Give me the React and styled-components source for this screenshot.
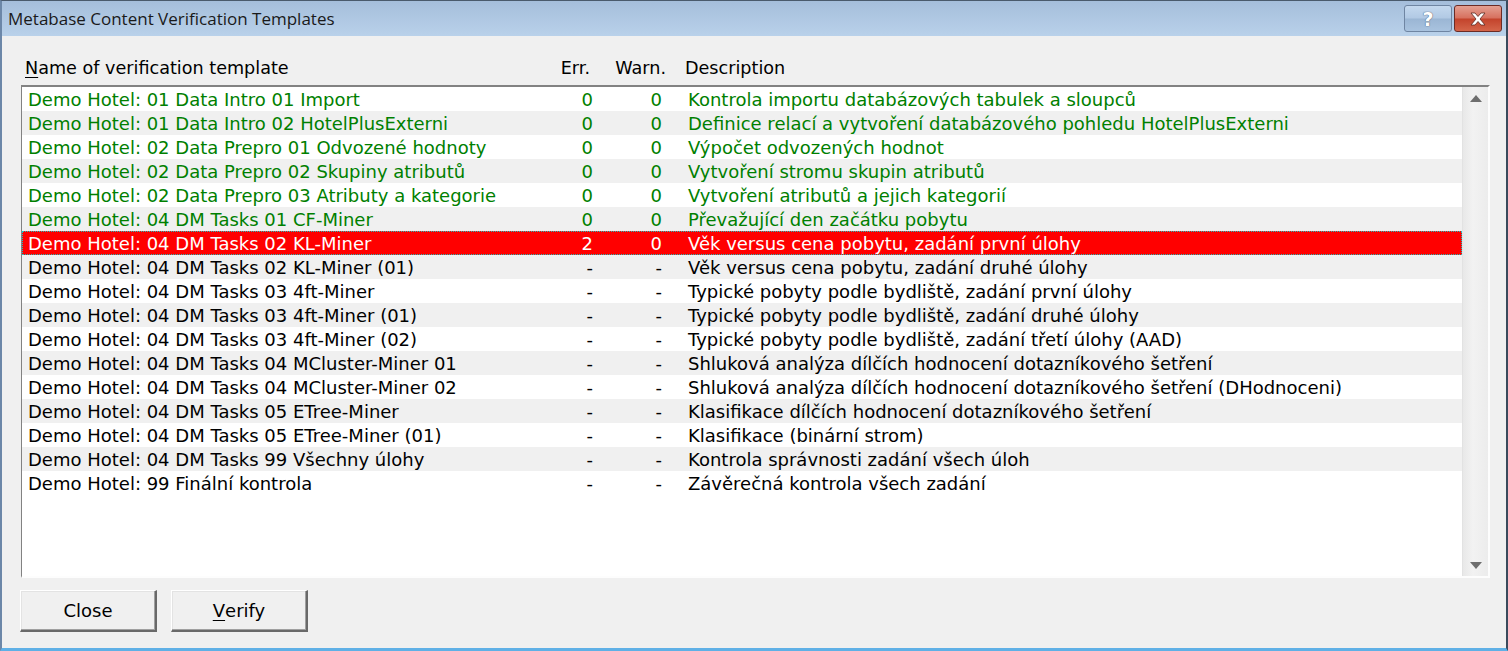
import React from 'react';
import styled, { createGlobalStyle } from 'styled-components';

const Global = createGlobalStyle`
  html, body { margin: 0; padding: 0; background: #f0f0f0; }
  body { font-family: "DejaVu Sans", Tahoma, sans-serif; }
`;

const rows = [
  ['Demo Hotel: 01 Data Intro 01 Import', '0', '0', 'Kontrola importu databázových tabulek a sloupců', 'ok'],
  ['Demo Hotel: 01 Data Intro 02 HotelPlusExterni', '0', '0', 'Definice relací a vytvoření databázového pohledu HotelPlusExterni', 'ok'],
  ['Demo Hotel: 02 Data Prepro 01 Odvozené hodnoty', '0', '0', 'Výpočet odvozených hodnot', 'ok'],
  ['Demo Hotel: 02 Data Prepro 02 Skupiny atributů', '0', '0', 'Vytvoření stromu skupin atributů', 'ok'],
  ['Demo Hotel: 02 Data Prepro 03 Atributy a kategorie', '0', '0', 'Vytvoření atributů a jejich kategorií', 'ok'],
  ['Demo Hotel: 04 DM Tasks 01 CF-Miner', '0', '0', 'Převažující den začátku pobytu', 'ok'],
  ['Demo Hotel: 04 DM Tasks 02 KL-Miner', '2', '0', 'Věk versus cena pobytu, zadání první úlohy', 'err'],
  ['Demo Hotel: 04 DM Tasks 02 KL-Miner (01)', '-', '-', 'Věk versus cena pobytu, zadání druhé úlohy', ''],
  ['Demo Hotel: 04 DM Tasks 03 4ft-Miner', '-', '-', 'Typické pobyty podle bydliště, zadání první úlohy', ''],
  ['Demo Hotel: 04 DM Tasks 03 4ft-Miner (01)', '-', '-', 'Typické pobyty podle bydliště, zadání druhé úlohy', ''],
  ['Demo Hotel: 04 DM Tasks 03 4ft-Miner (02)', '-', '-', 'Typické pobyty podle bydliště, zadání třetí úlohy (AAD)', ''],
  ['Demo Hotel: 04 DM Tasks 04 MCluster-Miner 01', '-', '-', 'Shluková analýza dílčích hodnocení dotazníkového šetření', ''],
  ['Demo Hotel: 04 DM Tasks 04 MCluster-Miner 02', '-', '-', 'Shluková analýza dílčích hodnocení dotazníkového šetření (DHodnoceni)', ''],
  ['Demo Hotel: 04 DM Tasks 05 ETree-Miner', '-', '-', 'Klasifikace dílčích hodnocení dotazníkového šetření', ''],
  ['Demo Hotel: 04 DM Tasks 05 ETree-Miner (01)', '-', '-', 'Klasifikace (binární strom)', ''],
  ['Demo Hotel: 04 DM Tasks 99 Všechny úlohy', '-', '-', 'Kontrola správnosti zadání všech úloh', ''],
  ['Demo Hotel: 99 Finální kontrola', '-', '-', 'Závěrečná kontrola všech zadání', ''],
];

const App = () => {
  return (
    <>
      <Global />
      <Window>
        <TitleBar>
          <Title>Metabase Content Verification Templates</Title>
          <Caption>
            <HelpBtn>?</HelpBtn>
            <CloseBtn>
              <svg width="20" height="16" viewBox="0 0 20 16">
                <path d="M3 2 L7 2 L10 5.5 L13 2 L17 2 L12 8 L17 14 L13 14 L10 10.5 L7 14 L3 14 L8 8 Z"
                  fill="#fff" stroke="#5a2a22" strokeWidth="0.8" strokeLinejoin="round" />
              </svg>
            </CloseBtn>
          </Caption>
        </TitleBar>
        <Body>
          <Header>
            <NameHead><u>N</u>ame of verification template</NameHead>
            <NumHead $w={69}>Err.</NumHead>
            <NumHead $w={76}>Warn.</NumHead>
            <DescHead>Description</DescHead>
          </Header>
          <ListBox>
            <Rows>
              {rows.map((r, i) => (
                <Row key={i} $alt={i % 2 === 1} $state={r[4]}>
                  <NameCell>{r[0]}</NameCell>
                  <NumCell>{r[1]}</NumCell>
                  <NumCell>{r[2]}</NumCell>
                  <DescCell>{r[3]}</DescCell>
                </Row>
              ))}
            </Rows>
            <ScrollBar>
              <Arrow>
                <svg width="12" height="7" viewBox="0 0 12 7"><path d="M0 7 L6 0 L12 7 Z" fill="#6e6e6e" /></svg>
              </Arrow>
              <Arrow>
                <svg width="12" height="7" viewBox="0 0 12 7"><path d="M0 0 L12 0 L6 7 Z" fill="#6e6e6e" /></svg>
              </Arrow>
            </ScrollBar>
          </ListBox>
          <Buttons>
            <Button>Close</Button>
            <Button><u>V</u>erify</Button>
          </Buttons>
        </Body>
      </Window>
    </>
  );
};

export default App;

const Window = styled.div`
  width: 1508px;
  height: 651px;
  box-sizing: border-box;
  display: flex;
  flex-direction: column;
  background: #f0f0f0;
  border-left: 2px solid #6c87a8;
  border-right: 2px solid #3a4a5c;
  border-top: 1px solid #4a5a6c;
  border-bottom: 3px solid #5fb0e6;
  overflow: hidden;
`;

const TitleBar = styled.div`
  height: 35px;
  flex: none;
  display: flex;
  align-items: flex-start;
  justify-content: space-between;
  background: linear-gradient(#a5bedb, #b9d1ea);
  padding: 0 4px 0 6px;
`;

const Title = styled.div`
  font-family: "Open Sans", "DejaVu Sans", sans-serif;
  font-size: 17px;
  color: #1a1a1a;
  line-height: 36px;
`;

const Caption = styled.div`
  display: flex;
  gap: 2px;
  margin-top: 4px;
`;

const CapBtn = styled.div`
  height: 27px;
  box-sizing: border-box;
  border-radius: 3px;
  display: flex;
  align-items: center;
  justify-content: center;
`;

const HelpBtn = styled(CapBtn)`
  width: 48px;
  border: 1px solid #6f85a2;
  background: linear-gradient(#c4d8ee 0%, #b1c9e4 48%, #9bb6d4 52%, #a9c3df 100%);
  color: #fff;
  font-family: "DejaVu Sans", sans-serif;
  font-weight: bold;
  font-size: 19px;
  text-shadow: 0 0 1px #4d5f78, 0 0 1px #4d5f78;
`;

const CloseBtn = styled(CapBtn)`
  width: 48px;
  border: 1px solid #6b2b25;
  background: linear-gradient(#e4a092 0%, #d7705e 48%, #c3432c 52%, #d4654a 100%);
`;

const Body = styled.div`
  flex: 1;
  display: flex;
  flex-direction: column;
  padding: 17px 16px 0 19px;
  font-family: "DejaVu Sans", Tahoma, sans-serif;
  font-size: 18px;
`;

const Header = styled.div`
  display: flex;
  height: 32px;
  align-items: flex-start;
  color: #000;
  padding-left: 4px;
  font-size: 17.6px;
`;

const NameHead = styled.div`
  width: 500px;
  line-height: 30px;
  u { text-underline-offset: 3px; }
`;

const NumHead = styled.div`
  width: ${p => p.$w}px;
  text-align: right;
  line-height: 30px;
  padding-right: 4px;
  box-sizing: border-box;
`;

const DescHead = styled.div`
  padding-left: 15px;
  line-height: 30px;
`;

const ListBox = styled.div`
  height: 493px;
  box-sizing: border-box;
  display: flex;
  background: #fff;
  border-top: 2px solid #828282;
  border-left: 1px solid #828282;
  border-right: 2px solid #fdfdfd;
  border-bottom: 2px solid #fdfdfd;
`;

const Rows = styled.div`
  flex: 1;
  display: flex;
  flex-direction: column;
`;

const Row = styled.div`
  height: 24px;
  box-sizing: border-box;
  display: flex;
  align-items: center;
  padding-left: 6px;
  white-space: nowrap;
  background: ${p => (p.$state === 'err' ? '#ff0000' : p.$alt ? '#f0f0f0' : '#ffffff')};
  color: ${p => (p.$state === 'err' ? '#ffffff' : p.$state === 'ok' ? '#008000' : '#000000')};
  outline: ${p => (p.$state === 'err' ? '1px dotted #20c0c0' : 'none')};
  outline-offset: -1px;
`;

const NameCell = styled.div`
  width: 499px;
  overflow: hidden;
`;

const NumCell = styled.div`
  width: 69px;
  text-align: right;
  padding-right: 3px;
  box-sizing: border-box;
`;

const DescCell = styled.div`
  padding-left: 23px;
`;

const ScrollBar = styled.div`
  width: 25px;
  flex: none;
  display: flex;
  flex-direction: column;
  justify-content: space-between;
  background: linear-gradient(90deg, #e8e8e8, #f2f2f2 40%, #ececec);
  border-left: 1px solid #e2e2e2;
`;

const Arrow = styled.div`
  height: 22px;
  display: flex;
  align-items: center;
  justify-content: center;
`;

const Buttons = styled.div`
  display: flex;
  gap: 14px;
  margin-top: 12px;
  margin-left: -1px;
`;

const Button = styled.div`
  width: 137px;
  height: 42px;
  box-sizing: border-box;
  display: flex;
  align-items: center;
  justify-content: center;
  background: #f0f0f0;
  border-top: 1px solid #ffffff;
  border-left: 1px solid #ffffff;
  border-right: 2px solid #696969;
  border-bottom: 2px solid #696969;
  box-shadow: inset -1px -1px 0 #a0a0a0, inset 1px 1px 0 #e3e3e3;
  font-size: 18px;
  color: #000;
  u { text-underline-offset: 3px; }
`;
